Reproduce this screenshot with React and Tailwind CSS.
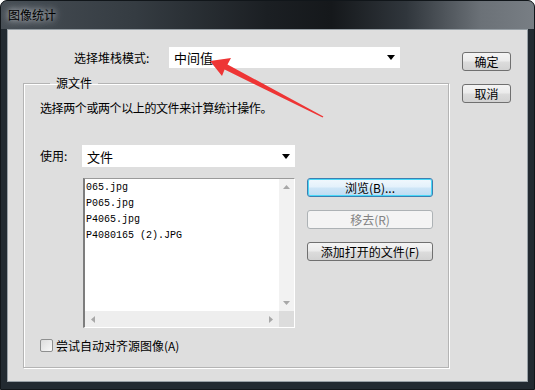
import React from "react";

const cjk = "font-['Noto_Sans_CJK_SC','Noto_Sans',sans-serif]";

function Dropdown({ value, className }) {
  return (
    <div className={`flex items-center bg-white h-[21px] pl-[5px] pr-[5px] ${className}`}>
      <span className={`flex-1 text-[13px] leading-none text-black ${cjk}`}>{value}</span>
      <svg width="8" height="5" viewBox="0 0 8 5">
        <path d="M0 0 H8 L4 5 Z" fill="#000" />
      </svg>
    </div>
  );
}

function Button({ children, width = "w-[49px]", variant = "normal" }) {
  const styles = {
    normal:
      "border-[#707070] bg-[linear-gradient(180deg,#f4f4f4_0%,#ebebeb_48%,#dcdcdc_52%,#d2d2d2_100%)] text-black",
    focused:
      "border-[#3c7fb1] bg-[linear-gradient(180deg,#f1f8fd_0%,#e3f1fb_48%,#cfe6f7_52%,#bddcf3_100%)] text-black shadow-[inset_0_0_0_1px_#48d8f8]",
    disabled: "border-[#adb2b5] bg-[#f4f4f4] text-[#838383]",
  };
  return (
    <button
      className={`h-[19px] ${width} rounded-[3px] border flex items-center justify-center text-[12px] leading-none ${cjk} ${styles[variant]}`}
    >
      {children}
    </button>
  );
}

function Arrow({ dir }) {
  const d = {
    up: "M0 4 L3.5 0 L7 4 Z",
    down: "M0 0 L7 0 L3.5 4 Z",
    left: "M4 0 L4 7 L0 3.5 Z",
    right: "M0 0 L0 7 L4 3.5 Z",
  }[dir];
  const vert = dir === "up" || dir === "down";
  return (
    <svg width={vert ? 7 : 4} height={vert ? 4 : 7} viewBox={vert ? "0 0 7 4" : "0 0 4 7"}>
      <path d={d} fill="#a8a8a8" />
    </svg>
  );
}

export default function App() {
  const files = ["065.jpg", "P065.jpg", "P4065.jpg", "P4080165 (2).JPG"];

  return (
    <div className="relative w-[535px] h-[390px] overflow-hidden bg-[#222a31] rounded-t-[7px] border border-[#11161a] flex flex-col">
      <div className="h-[28px] shrink-0 bg-[linear-gradient(90deg,#474e55_0%,#353c42_25%,#1b1f23_50%,#15181b_62%,#30363c_76%,#6b7177_90%,#787e84_100%)] flex items-center pl-[7px]">
        <span
          className={`text-[12px] leading-none text-black [text-shadow:0_0_6px_#c8ccd0,0_0_10px_#a8aeb4] ${cjk}`}
        >
          图像统计
        </span>
      </div>

      <div className="flex-1 mx-[6px] mb-[7px] border border-[#98a0a6] bg-[#dedede] flex pt-[17px]">
        {/* left column */}
        <div className="w-[426px] ml-[15px] flex flex-col">
          <div className="flex items-center h-[21px]">
            <span className={`ml-[51px] w-[95px] text-[12px] text-black ${cjk}`}>选择堆栈模式:</span>
            <Dropdown value="中间值" className="w-[231px]" />
          </div>

          <fieldset className="mt-[7px] border border-[#b4b4b4] shadow-[inset_1px_1px_0_#fff,1px_1px_0_#fff] pl-[16px] pb-[15px]">
            <legend className={`ml-[10px] px-[6px] text-[12px] leading-[16px] text-black ${cjk}`}>源文件</legend>
            <p className={`mt-[9px] text-[12px] leading-[16px] tracking-[-0.4px] text-black ${cjk}`}>
              选择两个或两个以上的文件来计算统计操作。
            </p>

            <div className="mt-[29px] flex items-center">
              <span className={`w-[42px] text-[12px] text-black ${cjk}`}>使用:</span>
              <Dropdown value="文件" className="w-[213px] h-[22px]" />
            </div>

            <div className="mt-[11px] flex">
              <div className="ml-[43px] w-[212px] h-[150px] bg-white border-l-2 border-t border-r border-b border-l-[#7d7d7d] border-t-[#9a9a9a] border-r-white border-b-white flex flex-col">
                <div className="flex flex-1">
                  <div className="flex-1 pt-[1px] pl-[1px]">
                    {files.map((f) => (
                      <div
                        key={f}
                        className="h-[16px] leading-[16px] text-[10px] text-black font-['Liberation_Mono',monospace] whitespace-pre"
                      >
                        {f}
                      </div>
                    ))}
                  </div>
                  <div className="w-[15px] bg-[#f2f2f2] flex flex-col items-center justify-between py-[6px]">
                    <Arrow dir="up" />
                    <Arrow dir="down" />
                  </div>
                </div>
                <div className="h-[16px] flex">
                  <div className="flex-1 bg-[#eeeeee] flex items-center justify-between px-[6px]">
                    <Arrow dir="left" />
                    <Arrow dir="right" />
                  </div>
                  <div className="w-[15px] bg-[#dcdcdc]" />
                </div>
              </div>

              <div className="ml-[12px] flex flex-col gap-[13px]">
                <Button width="w-[126px]" variant="focused">
                  浏览(B)...
                </Button>
                <Button width="w-[126px]" variant="disabled">
                  移去(R)
                </Button>
                <Button width="w-[126px]">添加打开的文件(F)</Button>
              </div>
            </div>

            <label className="mt-[11px] flex items-center gap-[3px]">
              <span className="w-[13px] h-[13px] rounded-[2px] border border-[#8e8f8f] bg-[linear-gradient(135deg,#dcdcdc,#f8f8f8)]" />
              <span className={`text-[12px] leading-none text-black ${cjk}`}>尝试自动对齐源图像(A)</span>
            </label>
          </fieldset>
        </div>

        {/* right buttons */}
        <div className="ml-[13px] pt-[5px] flex flex-col gap-[13px]">
          <Button>确定</Button>
          <Button>取消</Button>
        </div>
      </div>

      {/* red annotation arrow */}
      <svg
        className="absolute left-0 top-0 pointer-events-none"
        width="535"
        height="390"
        viewBox="0 0 535 390"
      >
        <polygon
          points="209,60 230,57 226.5,63.5 322.4,115.4 321.6,116.6 223.6,68.6 221,75"
          fill="#ee3535"
        />
      </svg>
    </div>
  );
}
